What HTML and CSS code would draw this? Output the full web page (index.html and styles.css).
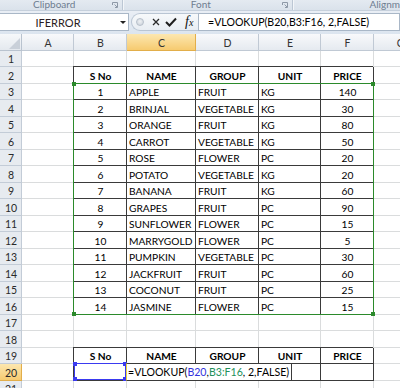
FILE: index.html
```html
<!DOCTYPE html>
<html>
<head>
<meta charset="utf-8">
<title>Excel VLOOKUP</title>
<link rel="stylesheet" href="styles.css">
</head>
<body>
<div class="ribbon">
  <div class="grp g1"><span>Clipboard</span><svg class="launch" width="6" height="6" viewBox="0 0 6 6"><path d="M0.5 3V0.5H5.5V5.5H3" stroke="#8d98a6" fill="none"/><path d="M2.5 2.5L5 5" stroke="#8d98a6"/></svg></div>
  <div class="grp g2"><span>Font</span><svg class="launch" width="6" height="6" viewBox="0 0 6 6"><path d="M0.5 3V0.5H5.5V5.5H3" stroke="#8d98a6" fill="none"/><path d="M2.5 2.5L5 5" stroke="#8d98a6"/></svg></div>
  <div class="grp g3"><span>Alignm</span></div>
</div>
<div class="fbar">
  <div class="namebox">IFERROR<i class="dd"></i></div>
  <div class="btns">
    <i class="ghost"></i>
    <svg class="ix" width="8" height="8" viewBox="0 0 8 8"><path d="M1 1L7 7M7 1L1 7" stroke="#2a2a2a" stroke-width="1.3"/></svg>
    <svg class="ok" width="12" height="10" viewBox="0 0 12 10"><path d="M1 5L4.5 8.5L11 1.5" stroke="#1e1e1e" stroke-width="2" fill="none"/></svg>
    <span class="fx">f<span class="fxs">x</span></span>
  </div>
  <div class="finput">=VLOOKUP(B20,B3:F16, 2,FALSE)</div>
</div>
<div class="sheet">
  <div class="corner"><svg width="11" height="11" viewBox="0 0 11 11"><polygon points="11,0 11,11 0,11" fill="#c9d0d9"/></svg></div>
  <div class="h">A</div><div class="h">B</div><div class="h hs">C</div><div class="h">D</div><div class="h">E</div><div class="h">F</div><div class="h">G</div>

  <div class="r">1</div><div class="c"></div><div class="c"></div><div class="c"></div><div class="c"></div><div class="c"></div><div class="c"></div><div class="c"></div>

  <div class="r">2</div><div class="c"></div><div class="t m b">S No</div><div class="t m b">NAME</div><div class="t m b">GROUP</div><div class="t m b">UNIT</div><div class="t m b">PRICE</div><div class="c"></div>

  <div class="r">3</div><div class="c"></div><div class="t m">1</div><div class="t">APPLE</div><div class="t">FRUIT</div><div class="t">KG</div><div class="t m">140</div><div class="c"></div>
  <div class="r">4</div><div class="c"></div><div class="t m">2</div><div class="t">BRINJAL</div><div class="t">VEGETABLE</div><div class="t">KG</div><div class="t m">30</div><div class="c"></div>
  <div class="r">5</div><div class="c"></div><div class="t m">3</div><div class="t">ORANGE</div><div class="t">FRUIT</div><div class="t">KG</div><div class="t m">80</div><div class="c"></div>
  <div class="r">6</div><div class="c"></div><div class="t m">4</div><div class="t">CARROT</div><div class="t">VEGETABLE</div><div class="t">KG</div><div class="t m">50</div><div class="c"></div>
  <div class="r">7</div><div class="c"></div><div class="t m">5</div><div class="t">ROSE</div><div class="t">FLOWER</div><div class="t">PC</div><div class="t m">20</div><div class="c"></div>
  <div class="r">8</div><div class="c"></div><div class="t m">6</div><div class="t">POTATO</div><div class="t">VEGETABLE</div><div class="t">KG</div><div class="t m">20</div><div class="c"></div>
  <div class="r">9</div><div class="c"></div><div class="t m">7</div><div class="t">BANANA</div><div class="t">FRUIT</div><div class="t">KG</div><div class="t m">60</div><div class="c"></div>
  <div class="r">10</div><div class="c"></div><div class="t m">8</div><div class="t">GRAPES</div><div class="t">FRUIT</div><div class="t">PC</div><div class="t m">90</div><div class="c"></div>
  <div class="r">11</div><div class="c"></div><div class="t m">9</div><div class="t">SUNFLOWER</div><div class="t">FLOWER</div><div class="t">PC</div><div class="t m">15</div><div class="c"></div>
  <div class="r">12</div><div class="c"></div><div class="t m">10</div><div class="t">MARRYGOLD</div><div class="t">FLOWER</div><div class="t">PC</div><div class="t m">5</div><div class="c"></div>
  <div class="r">13</div><div class="c"></div><div class="t m">11</div><div class="t">PUMPKIN</div><div class="t">VEGETABLE</div><div class="t">PC</div><div class="t m">30</div><div class="c"></div>
  <div class="r">14</div><div class="c"></div><div class="t m">12</div><div class="t">JACKFRUIT</div><div class="t">FRUIT</div><div class="t">PC</div><div class="t m">60</div><div class="c"></div>
  <div class="r">15</div><div class="c"></div><div class="t m">13</div><div class="t">COCONUT</div><div class="t">FRUIT</div><div class="t">PC</div><div class="t m">25</div><div class="c"></div>
  <div class="r">16</div><div class="c"></div><div class="t m">14</div><div class="t">JASMINE</div><div class="t">FLOWER</div><div class="t">PC</div><div class="t m">15</div><div class="c"></div>

  <div class="r">17</div><div class="c"></div><div class="c"></div><div class="c"></div><div class="c"></div><div class="c"></div><div class="c"></div><div class="c"></div>
  <div class="r">18</div><div class="c"></div><div class="c"></div><div class="c"></div><div class="c"></div><div class="c"></div><div class="c"></div><div class="c"></div>

  <div class="r">19</div><div class="c"></div><div class="t m b">S No</div><div class="t m b">NAME</div><div class="t m b">GROUP</div><div class="t m b">UNIT</div><div class="t m b">PRICE</div><div class="c"></div>
  <div class="r rs">20</div><div class="c"></div><div class="t"></div><div class="t"></div><div class="t"></div><div class="t"></div><div class="t"></div><div class="c"></div>
  <div class="r">21</div><div class="c"></div><div class="c"></div><div class="c"></div><div class="c"></div><div class="c"></div><div class="c"></div><div class="c"></div>

  <div class="rng"><i class="sq tl"></i><i class="sq tr"></i><i class="sq bl"></i><i class="sq br"></i></div>
  <div class="sel"><i class="sq tl"></i><i class="sq tr"></i><i class="sq bl"></i><i class="sq br"></i></div>
  <div class="edit">=VLOOKUP(<span class="rb">B20</span>,<span class="rg">B3:F16</span>, 2,FALSE)</div>
</div>
</body>
</html>
```

FILE: styles.css
```css
* { box-sizing: border-box; margin: 0; padding: 0; }
html, body { width: 400px; height: 388px; overflow: hidden; background: #fff; }
body { font-family: Lato, "Open Sans", sans-serif; font-size: 10.2px; color: #000; }

/* ribbon group labels */
.ribbon { height: 11px; display: flex; background: linear-gradient(#e4eaf1, #dae2eb); border-bottom: 1px solid #c6d0dc; overflow: hidden; }
.grp { position: relative; display: flex; border-right: 1px solid #bcc7d4; box-shadow: 1px 0 0 #f3f6f9; }
.grp span { font-size: 10px; line-height: 10px; margin-top: -1px; color: #6e7d90; white-space: nowrap; }
.g1 { width: 124px; padding-left: 33px; }
.g2 { width: 172px; padding-left: 68px; }
.g3 { flex: 1; padding-left: 76px; border-right: 0; box-shadow: none; }
.launch { position: absolute; right: 4px; top: 2px; }

/* formula bar */
.fbar { height: 23px; display: flex; align-items: flex-start; padding-top: 2px; background: linear-gradient(#e9eef5, #dce5ef); }
.namebox { position: relative; width: 129px; height: 18px; background: #fff; border: 1px solid #a9b7c7; border-left: 0; display: flex; align-items: center; justify-content: center; padding-right: 12px; font-size: 11px; color: #2a1c22; }
.dd { position: absolute; right: 2px; top: 7px; border-left: 3px solid transparent; border-right: 3px solid transparent; border-top: 3px solid #222; }
.btns { width: 67px; height: 18px; margin-left: 2px; display: flex; align-items: center; border: 1px solid #b9c5d3; border-right: 0; border-radius: 9px 0 0 9px; background: linear-gradient(#f7f9fb, #e8edf3); }
.ghost { width: 8px; height: 8px; margin-left: 4px; border-radius: 50%; background: radial-gradient(circle at 50% 40%, #eef1f4, #c8cfd8); border: 1px solid #b7c0cb; }
.ix { margin-left: 8px; }
.ok { margin-left: 5px; }
.fx { margin-left: 8px; font-family: "Liberation Serif", serif; font-style: italic; font-size: 14px; color: #111; line-height: 14px; }
.fxs { font-size: 10px; }
.finput { flex: 1; height: 18px; background: #fff; border: 1px solid #a9b7c7; padding-left: 9px; display: flex; align-items: center; white-space: nowrap; font-size: 10.6px; color: #000; }

/* sheet grid */
.sheet { position: relative; display: grid; width: 400px; overflow: hidden; grid-template-columns: 22px 52px 53px 69px 63px 62px 53px 53px; grid-template-rows: 17px repeat(10, 16px 17px) 16px; }
.c, .t, .h, .r, .corner { display: flex; align-items: flex-end; padding: 0 2px 2px 2px; white-space: nowrap; overflow: hidden; }
.c { box-shadow: inset -1px -1px 0 #dadcdd; }
.t { box-shadow: inset -1px -1px 0 #3a3a3a, -1px -1px 0 #3a3a3a; }
.m { justify-content: center; }
.b { font-weight: bold; }
.corner { padding: 0 2px 2px 0; justify-content: flex-end; background: linear-gradient(#f6f8fa, #e3e8ee); box-shadow: inset -1px -1px 0 #b9c3cf; }
.h { justify-content: center; background: linear-gradient(#f8f9fb, #e4e9ef); box-shadow: inset -1px -1px 0 #c0c9d4; color: #333; font-size: 10.5px; }
.hs { background: linear-gradient(#fce7b0, #f6c96c); box-shadow: inset -1px -1px 0 #e2ae4a; }
.r { justify-content: center; align-items: center; padding: 0; background: #e7ebf0; box-shadow: inset -1px -1px 0 #c3ccd7; color: #2a2a2a; font-size: 10.5px; }
.rs { background: linear-gradient(#fce7b0, #f6c96c); box-shadow: inset -1px -1px 0 #e2ae4a; }

/* formula reference highlights (overlays) */
.rng { position: absolute; grid-column: 3 / 8; grid-row: 4 / 18; left: -1px; top: -1px; right: 0; bottom: 0; border: 1px solid #2b8a2b; }
.rng .sq { background: #2b8a2b; }
.sel { position: absolute; grid-column: 3 / 4; grid-row: 21 / 22; left: 0; top: -1px; right: 1px; bottom: 1px; border: 1px solid #3a3af0; }
.sel .sq { background: #3a3af0; }
.sq { position: absolute; width: 4px; height: 4px; }
.tl { left: -2px; top: -2px; }
.tr { right: -2px; top: -2px; }
.bl { left: -2px; bottom: -2px; }
.br { right: -2px; bottom: -2px; }

.edit { position: absolute; grid-column: 4 / 5; grid-row: 21 / 22; left: -1px; top: -1px; bottom: 0; width: 166px; background: #fff; border: 1px solid #3a3a3a; border-left-color: #ecd23a; display: flex; align-items: flex-end; padding: 0 0 2px 1px; white-space: nowrap; font-size: 10.6px; }
.rb { color: #3333dd; }
.rg { color: #23915a; }
```
